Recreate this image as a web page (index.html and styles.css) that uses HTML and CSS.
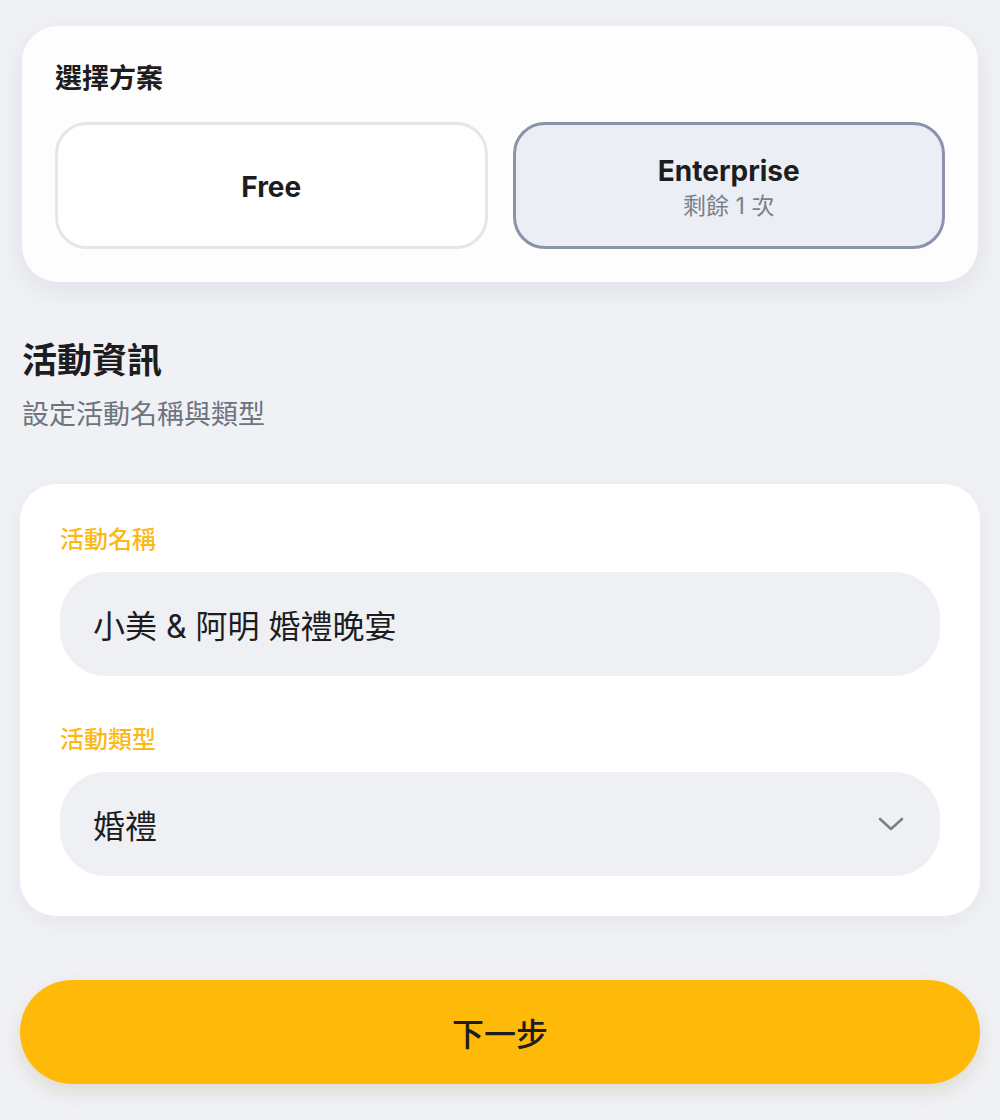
FILE: index.html
```html
<!DOCTYPE html>
<html lang="zh-Hant">
<head>
<meta charset="utf-8">
<title>建立活動</title>
<link rel="stylesheet" href="styles.css">
</head>
<body>
<main class="page">
  <section class="plan-card">
    <h2 class="plan-title">選擇方案</h2>
    <div class="plan-grid">
      <button class="plan-option">
        <span class="plan-name">Free</span>
      </button>
      <button class="plan-option plan-option--active">
        <span class="plan-name">Enterprise</span>
        <span class="plan-meta">剩餘 1 次</span>
      </button>
    </div>
  </section>

  <header class="section-head">
    <h1 class="section-title">活動資訊</h1>
    <p class="section-sub">設定活動名稱與類型</p>
  </header>

  <section class="form-card">
    <div class="field">
      <label class="field-label">活動名稱</label>
      <div class="field-input">小美 &amp; 阿明 婚禮晚宴</div>
    </div>
    <div class="field">
      <label class="field-label">活動類型</label>
      <div class="field-input field-select">
        <span>婚禮</span>
        <svg class="chevron" width="26" height="16" viewBox="0 0 26 16" fill="none">
          <path d="M2 3 L13 13 L24 3" stroke="#7b7f89" stroke-width="2.6" stroke-linecap="round" stroke-linejoin="round"/>
        </svg>
      </div>
    </div>
  </section>

  <button class="next-btn">下一步</button>
</main>
</body>
</html>
```

FILE: styles.css
```css
* { box-sizing: border-box; }
html, body {
  margin: 0;
  padding: 0;
  background: #f0f1f5;
}
body {
  font-family: "Inter", "Noto Sans CJK TC", "Noto Sans", sans-serif;
  color: #1d1d1f;
}
.page {
  padding: 26px 20px 36px;
  display: flex;
  flex-direction: column;
}
.plan-card {
  margin: 0 2px;
  background: #fdfdfd;
  border-radius: 36px;
  padding: 39px 33px 33px;
  box-shadow: 0 8px 28px rgba(20, 30, 60, 0.07);
}
.plan-title {
  margin: 0 0 29px;
  font-size: 27px;
  line-height: 28px;
  font-weight: 700;
  color: #1d1d1f;
}
.plan-grid {
  display: grid;
  grid-template-columns: 1fr 1fr;
  gap: 25px;
}
.plan-option {
  height: 127px;
  border: 3px solid #e6e6e8;
  border-radius: 32px;
  background: #ffffff;
  display: flex;
  flex-direction: column;
  align-items: center;
  justify-content: center;
  font-family: inherit;
  padding: 3px 0 0;
  gap: 5px;
}
.plan-option--active {
  border-color: #8a93a9;
  background: #eceef5;
}
.plan-name {
  font-size: 28px;
  line-height: 32px;
  font-weight: 700;
  color: #1d1d1f;
}
.plan-meta {
  font-size: 23px;
  line-height: 28px;
  color: #7b7f89;
}
.section-head {
  margin-top: 58px;
  padding-left: 2px;
}
.section-title {
  margin: 0;
  font-size: 35px;
  line-height: 40px;
  font-weight: 700;
  color: #1d1d1f;
}
.section-sub {
  margin: 19px 0 0;
  font-size: 27px;
  line-height: 32px;
  color: #6e7380;
}
.form-card {
  margin-top: 53px;
  background: #ffffff;
  border-radius: 36px;
  padding: 41px 40px 40px;
  display: flex;
  flex-direction: column;
  gap: 49px;
  box-shadow: 0 6px 22px rgba(20, 30, 60, 0.05);
}
.field {
  display: flex;
  flex-direction: column;
  gap: 17px;
}
.field-label {
  font-size: 24px;
  line-height: 30px;
  font-weight: 500;
  color: #fbb817;
}
.field-input {
  height: 104px;
  border-radius: 46px;
  background: #eff0f4;
  padding: 0 33px;
  display: flex;
  align-items: center;
  font-size: 32px;
  color: #1d1d1f;
}
.field-select {
  justify-content: space-between;
  padding-right: 36px;
}
.chevron { display: block; }
.next-btn {
  margin-top: 64px;
  height: 104px;
  border: none;
  border-radius: 52px;
  background: #ffb909;
  font-family: inherit;
  font-size: 32px;
  font-weight: 500;
  color: #1d1d1f;
  box-shadow: 0 8px 18px rgba(120, 90, 0, 0.14);
}
```
